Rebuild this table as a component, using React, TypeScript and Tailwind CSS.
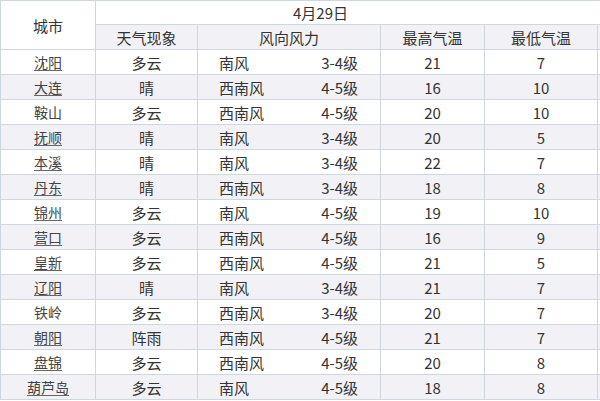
import React from "react";

type Row = {
  city: string;
  link: boolean;
  weather: string;
  dir: string;
  level: string;
  high: number;
  low: number;
};

const rows: Row[] = [
  { city: "沈阳", link: true, weather: "多云", dir: "南风", level: "3-4级", high: 21, low: 7 },
  { city: "大连", link: true, weather: "晴", dir: "西南风", level: "4-5级", high: 16, low: 10 },
  { city: "鞍山", link: false, weather: "多云", dir: "西南风", level: "4-5级", high: 20, low: 10 },
  { city: "抚顺", link: true, weather: "晴", dir: "南风", level: "3-4级", high: 20, low: 5 },
  { city: "本溪", link: true, weather: "晴", dir: "南风", level: "3-4级", high: 22, low: 7 },
  { city: "丹东", link: true, weather: "晴", dir: "西南风", level: "3-4级", high: 18, low: 8 },
  { city: "锦州", link: true, weather: "多云", dir: "南风", level: "4-5级", high: 19, low: 10 },
  { city: "营口", link: true, weather: "多云", dir: "西南风", level: "4-5级", high: 16, low: 9 },
  { city: "皇新", link: true, weather: "多云", dir: "西南风", level: "4-5级", high: 21, low: 5 },
  { city: "辽阳", link: true, weather: "晴", dir: "南风", level: "3-4级", high: 21, low: 7 },
  { city: "铁岭", link: false, weather: "多云", dir: "西南风", level: "3-4级", high: 20, low: 7 },
  { city: "朝阳", link: true, weather: "阵雨", dir: "西南风", level: "4-5级", high: 21, low: 7 },
  { city: "盘锦", link: true, weather: "多云", dir: "西南风", level: "4-5级", high: 20, low: 8 },
  { city: "葫芦岛", link: true, weather: "多云", dir: "南风", level: "4-5级", high: 18, low: 8 },
];

const cell = "border border-[#cdd7de] p-0 text-center align-middle";

export default function App() {
  return (
    <div
      className="h-[401px] w-[600px] overflow-hidden bg-white text-[15px] text-[#333]"
      style={{ fontFamily: '"Noto Sans CJK SC", "Noto Sans", sans-serif' }}
    >
      <table className="w-[660px] table-fixed border-collapse leading-none">
        <colgroup>
          <col className="w-[95px]" />
          <col className="w-[102px]" />
          <col className="w-[183px]" />
          <col className="w-[104px]" />
          <col className="w-[113px]" />
          <col className="w-[63px]" />
        </colgroup>
        <thead>
          <tr className="h-[24px]">
            <th rowSpan={2} className={`${cell} font-normal`}>
              城市
            </th>
            <th colSpan={5} className={`${cell} pr-[115px] font-normal`}>
              4月29日
            </th>
          </tr>
          <tr className="h-[25px] bg-[#f2f2f6]">
            <th className={`${cell} font-normal`}>天气现象</th>
            <th className={`${cell} font-normal`}>风向风力</th>
            <th className={`${cell} font-normal`}>最高气温</th>
            <th className={`${cell} font-normal`}>最低气温</th>
            <th className={`${cell} font-normal`}></th>
          </tr>
        </thead>
        <tbody>
          {rows.map((r, i) => (
            <tr key={r.city} className={`h-[25px] ${i % 2 === 1 ? "bg-[#f2f2f6]" : "bg-white"}`}>
              <td className={`${cell} text-[14px] text-[#444]`}>
                <span className={r.link ? "underline underline-offset-2 decoration-[#666]" : ""}>
                  {r.city}
                </span>
              </td>
              <td className={cell}>{r.weather}</td>
              <td className={cell}>
                <div className="flex items-center justify-between pl-[21px] pr-[22px]">
                  <span>{r.dir}</span>
                  <span>{r.level}</span>
                </div>
              </td>
              <td className={cell}>{r.high}</td>
              <td className={cell}>{r.low}</td>
              <td className={cell}></td>
            </tr>
          ))}
        </tbody>
      </table>
    </div>
  );
}
